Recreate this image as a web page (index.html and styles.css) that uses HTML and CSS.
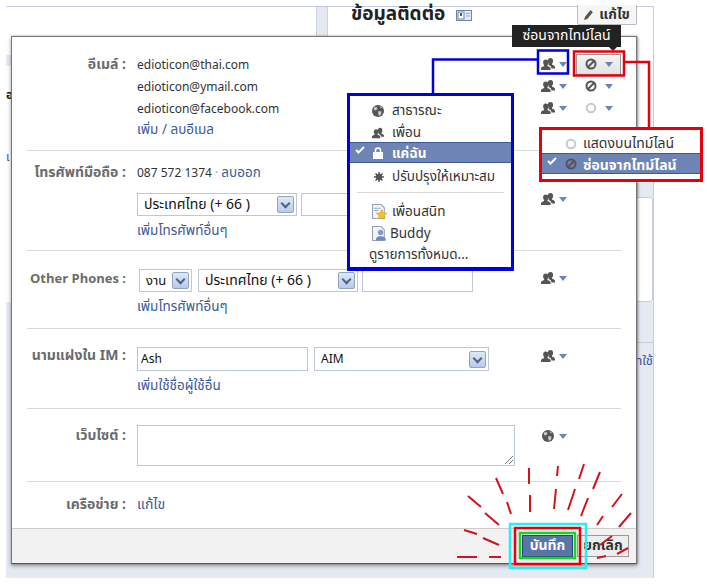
FILE: index.html
```html
<!DOCTYPE html>
<html lang="th">
<head>
    <meta charset="UTF-8">
    <meta name="viewport" content="width=device-width, initial-scale=1.0">
    <title>ข้อมูลติดต่อ</title>
    <link rel="stylesheet" href="styles.css">
</head>
<body>
    <svg class="sprites" width="0" height="0">
        <symbol id="i-friends" viewBox="0 0 14 12">
            <path d="M9.500 0c1.700 0 2.600 1.300 2.600 3 0 1.200-.5 2.200-1.100 2.800l.1 1c1.200.4 2.900 1 2.900 2.200v1.500h-3.500c0-1.900-1.300-2.700-3-3.500l.1-1.400c-.5-.7-.8-1.500-.8-2.500C6.800 1.300 7.800 0 9.500 0z"/>
            <path d="M4.800 1.500c1.700 0 2.700 1.300 2.700 3 0 1-.4 1.900-1 2.500v.9c1.500.5 3.100 1.200 3.100 2.400V12H0v-1.700c0-1.200 1.600-1.900 3.100-2.400V7c-.6-.6-1-1.500-1-2.500 0-1.700 1-3 2.700-3z"/>
        </symbol>
        <symbol id="i-block" viewBox="0 0 12 12">
            <circle cx="6" cy="6" r="4.500" fill="none" stroke="currentColor" stroke-width="2"/>
            <path d="M3 9l6-6" stroke="currentColor" stroke-width="2"/>
        </symbol>
        <symbol id="i-ring" viewBox="0 0 12 12">
            <circle cx="6" cy="6" r="4.300" fill="none" stroke="#c8c8c8" stroke-width="2"/>
        </symbol>
        <symbol id="i-globe" viewBox="0 0 12 12">
            <circle cx="6" cy="6" r="6" fill="#555"/>
            <path d="M2 2.500l2.500-.5 1 1.500-1.500 2-2-.5zM6.500 6l3 .5-.5 3-2 1.500-1-3zM8 1l2 1.500-1.500 1z" fill="#c9c9c9"/>
        </symbol>
        <symbol id="i-lock" viewBox="0 0 10 12">
            <path d="M0 5h10v7H0z"/>
            <path d="M2.500 5.500V3.500a2.500 2.500 0 0 1 5 0v2" fill="none" stroke="currentColor" stroke-width="1.600"/>
        </symbol>
        <symbol id="i-gear" viewBox="0 0 10 10">
            <circle cx="5" cy="5" r="2.300" fill="none" stroke="currentColor" stroke-width="1.800"/>
            <path d="M5 0v10M0 5h10M1.500 1.500l7 7M8.500 1.500l-7 7" stroke="currentColor" stroke-width="1.500"/>
        </symbol>
        <symbol id="i-check" viewBox="0 0 10 8">
            <path d="M1 4l2.500 2.500L9 1" fill="none" stroke="currentColor" stroke-width="2"/>
        </symbol>
    </svg>

    <!-- หน้าหลังกล่อง -->
    <div class="page">
        <div class="page-head">
            <div class="page-gutter"></div>
            <h2>ข้อมูลติดต่อ</h2>
            <svg class="card-icon" width="16" height="11" viewBox="0 0 16 11">
                <rect x=".5" y=".5" width="15" height="10" fill="#e4e9f4" stroke="#6d84b4"/>
                <rect x="2" y="2" width="6" height="7" fill="#fff" stroke="#6d84b4"/>
                <rect x="4" y="3" width="2" height="3" fill="#3b5998"/>
                <path d="M10 3.500h4M10 6h4" stroke="#9aabcc"/>
            </svg>
            <button class="page-edit">
                <svg width="11" height="11" viewBox="0 0 10 10"><path d="M0 10l1-3 5-6 2 2-5 6z" fill="#555"/></svg>
                แก้ไข
            </button>
        </div>
        <div class="page-body">
            <div class="rail-left">
                <div class="rail-tab"></div>
                <div class="rail-space">
                    <b class="cut-a">อ</b>
                    <span class="cut-b">เ</span>
                </div>
                <div class="rail-fill"></div>
            </div>
            <div class="page-main"></div>
            <div class="rail-right">
                <div class="rail-white"></div>
                <div class="rail-band"></div>
                <div class="rail-card"></div>
                <div class="rail-band rail-band-low"></div>
                <div class="rail-link">าใช้</div>
                <div class="rail-fill"></div>
            </div>
        </div>
        <div class="page-foot"></div>
    </div>

    <!-- กล่องแก้ไข -->
    <div class="dialog">
        <div class="row row-email">
            <div class="label">อีเมล์ :</div>
            <div class="field">
                <div class="line">edioticon@thai.com</div>
                <div class="line">edioticon@ymail.com</div>
                <div class="line">edioticon@facebook.com</div>
                <a class="line" href="#">เพิ่ม / ลบอีเมล</a>
            </div>
            <div class="privacy">
                <div class="privacy-line">
                    <span class="pick"><svg class="ico-f"><use href="#i-friends"/></svg><i class="arrow"></i></span>
                    <span class="pick pick-active"><svg class="ico-s"><use href="#i-block"/></svg><i class="arrow"></i></span>
                </div>
                <div class="privacy-line">
                    <span class="pick"><svg class="ico-f"><use href="#i-friends"/></svg><i class="arrow"></i></span>
                    <span class="pick pick-second"><svg class="ico-s"><use href="#i-block"/></svg><i class="arrow"></i></span>
                </div>
                <div class="privacy-line">
                    <span class="pick"><svg class="ico-f"><use href="#i-friends"/></svg><i class="arrow"></i></span>
                    <span class="pick pick-second"><svg class="ico-s"><use href="#i-ring"/></svg><i class="arrow"></i></span>
                </div>
            </div>
        </div>

        <div class="row row-mobile">
            <div class="label">โทรศัพท์มือถือ :</div>
            <div class="field">
                <div class="line">087 572 1374 <span class="dot">·</span> <a href="#">ลบออก</a></div>
                <div class="controls controls-mobile">
                    <div class="select w-country"><span>ประเทศไทย (+ 66 )</span><i class="select-btn"></i></div>
                    <div class="input w-number"></div>
                </div>
                <a class="line link-after" href="#">เพิ่มโทรศัพท์อื่นๆ</a>
            </div>
            <div class="privacy privacy-mobile">
                <span class="pick"><svg class="ico-f"><use href="#i-friends"/></svg><i class="arrow"></i></span>
            </div>
        </div>

        <div class="row row-other">
            <div class="label label-latin">Other Phones :</div>
            <div class="field">
                <div class="controls controls-other">
                    <div class="select w-type"><span>งาน</span><i class="select-btn"></i></div>
                    <div class="select w-country"><span>ประเทศไทย (+ 66 )</span><i class="select-btn"></i></div>
                    <div class="input w-other"></div>
                </div>
                <a class="line link-after" href="#">เพิ่มโทรศัพท์อื่นๆ</a>
            </div>
            <div class="privacy">
                <span class="pick"><svg class="ico-f"><use href="#i-friends"/></svg><i class="arrow"></i></span>
            </div>
        </div>

        <div class="row row-im">
            <div class="label">นามแฝงใน IM :</div>
            <div class="field">
                <div class="controls">
                    <div class="input w-name">Ash</div>
                    <div class="select w-service"><span>AIM</span><i class="select-btn"></i></div>
                </div>
                <a class="line link-after" href="#">เพิ่มใช้ชื่อผู้ใช้อื่น</a>
            </div>
            <div class="privacy">
                <span class="pick"><svg class="ico-f"><use href="#i-friends"/></svg><i class="arrow"></i></span>
            </div>
        </div>

        <div class="row row-web">
            <div class="label">เว็บไซต์ :</div>
            <div class="field">
                <div class="textarea">
                    <svg class="grip" width="8" height="8" viewBox="0 0 8 8"><path d="M0 8l8-8M4 8l4-4" stroke="#777"/></svg>
                </div>
            </div>
            <div class="privacy">
                <span class="pick"><svg class="ico-f"><use href="#i-globe"/></svg><i class="arrow"></i></span>
            </div>
        </div>

        <div class="row row-net">
            <div class="label">เครือข่าย :</div>
            <div class="field"><a class="line link-edit" href="#">แก้ไข</a></div>
        </div>

        <div class="foot">
            <button class="btn btn-save">บันทึก</button>
            <button class="btn btn-cancel">ยกเลิก</button>
        </div>
    </div>

    <!-- tooltip -->
    <div class="tip">ซ่อนจากไทม์ไลน์</div>

    <!-- เมนู -->
    <div class="menu menu-audience">
        <div class="item"><svg class="item-ico"><use href="#i-globe"/></svg>สาธารณะ</div>
        <div class="item"><svg class="item-ico"><use href="#i-friends"/></svg>เพื่อน</div>
        <div class="item item-on">
            <svg class="item-check"><use href="#i-check"/></svg>
            <svg class="item-ico"><use href="#i-lock"/></svg>แค่ฉัน
        </div>
        <div class="item"><svg class="item-ico item-ico-small"><use href="#i-gear"/></svg>ปรับปรุงให้เหมาะสม</div>
        <div class="menu-sep"></div>
        <div class="item">
            <svg class="item-doc" viewBox="0 0 14 14">
                <path d="M.5.500h8l3 3v10H.5z" fill="#f4f4f4" stroke="#9aa3b5"/>
                <path d="M2 4h6M2 6h4" stroke="#9aa3b5"/>
                <path d="M9 5l1.500 3.200 3.500.4-2.600 2.300.8 3.100L9 12.300 5.800 14l.8-3.100L4 8.600l3.500-.4z" fill="#f5c518" stroke="#c9a227" stroke-width=".5"/>
            </svg>เพื่อนสนิท
        </div>
        <div class="item item-buddy">
            <svg class="item-doc" viewBox="0 0 14 14">
                <path d="M.5.500h8l3 3v10H.5z" fill="#f4f4f4" stroke="#9aa3b5"/>
                <circle cx="8" cy="6" r="2.500" fill="#7f9bcb"/>
                <path d="M3.500 13.500c0-3 2-4 4.500-4s5 1 5 4z" fill="#6d8bc0"/>
            </svg>Buddy
        </div>
        <div class="item item-all">ดูรายการทั้งหมด...</div>
    </div>

    <div class="menu menu-timeline">
        <div class="item"><svg class="item-ico item-ico-ring"><use href="#i-ring"/></svg>แสดงบนไทม์ไลน์</div>
        <div class="item item-on">
            <svg class="item-check"><use href="#i-check"/></svg>
            <svg class="item-ico item-ico-ring item-ico-dark"><use href="#i-block"/></svg>ซ่อนจากไทม์ไลน์
        </div>
    </div>

    <!-- เส้นและกรอบที่วาดทับ -->
    <svg class="marks" width="707" height="584" viewBox="0 0 707 584">
        <path class="blue" d="M538 50.500h30v23h-30zM538 59.500H433v35"/>
        <path class="red" d="M574 51.500h50v24h-50zM623 62h26v65"/>
        <rect class="cyan" x="510" y="524" width="76" height="44"/>
        <rect class="red" x="515" y="528" width="65" height="36"/>
        <rect class="green" x="520" y="533" width="55" height="25"/>
        <path class="ray" d="M529 468v16M530 495v17M558 466l-1 10M556 489l-2 20M584 464l-5 15M600 472l-7 17M575 489l-7 21M588 498l-7 18M622 494l-10 13M603 516l-6 9M631 513l-12 14M612 536l-12 9M628 548l-11 6M606 556l-9 2M496 478l7 16M507 502l4 12M468 496l13 11M485 513l14 12M464 530l13 4M483 538l16 7M457 557h20M489 557h12"/>
    </svg>
</body>
</html>
```

FILE: styles.css
```css
* { box-sizing: border-box; }
html, body { margin: 0; padding: 0; }
body { width: 707px; height: 584px; position: relative; overflow: hidden; background: #fff; font-family: "Noto Sans Thai", Tahoma, "Liberation Sans", "Noto Sans", sans-serif; font-size: 12px; color: #333; }
a { color: #3b5998; text-decoration: none; font-size: 13.5px; }
.sprites { position: absolute; }

/* page behind the dialog */
.page { width: 648px; height: 572px; margin: 6px 0 0 6px; border-top: 1px solid #c5cbe0; border-right: 1px solid #c5cbe0; display: flex; flex-direction: column; }
.page-head { height: 29px; display: flex; align-items: flex-start; flex: none; }
.page-gutter { width: 12px; height: 29px; margin-left: 310px; background: #e5e9f2; border-left: 1px solid #ccd2e2; border-right: 1px solid #ccd2e2; }
.page-head h2 { margin: -3px 0 0 23px; font-size: 19px; line-height: 22px; color: #222; }
.card-icon { margin: 3px 0 0 11px; }
.page-edit { margin: -2px 16px 0 auto; height: 20px; width: 60px; display: flex; align-items: center; justify-content: center; gap: 4px; padding: 0; background: #f6f6f6; border: 1px solid #bbb; border-top: 0; border-radius: 0 0 2px 2px; font: bold 14px "Noto Sans Thai", Tahoma, sans-serif; color: #333; }
.page-body { flex: 1; display: flex; }
.rail-left { width: 5px; display: flex; flex-direction: column; }
.rail-tab { height: 11px; margin-top: 19px; background: #e5e9f2; flex: none; }
.rail-space { height: 236px; flex: none; font-size: 12px; }
.cut-a { display: block; margin-top: 20px; color: #222; }
.cut-b { display: block; margin-top: 44px; color: #3b5998; }
.rail-fill { flex: 1; background: #e5e9f2; }
.page-main { flex: 1; }
.rail-right { width: 17px; display: flex; flex-direction: column; }
.rail-white { height: 147px; }
.rail-band { height: 14px; background: #e5e9f2; }
.rail-card { height: 105px; border: 1px solid #c5cbe0; border-left: 0; border-radius: 0 3px 3px 0; background: #fff; }
.rail-band-low { height: 41px; border-bottom: 1px solid #ccc; }
.rail-link { height: 30px; padding-top: 8px; font-size: 13px; color: #3b5998; background: #e5e9f2; white-space: nowrap; direction: rtl; overflow: hidden; }
.page-foot { height: 14px; flex: none; background: #e5e9f2; }

/* dialog */
.dialog { position: absolute; left: 11px; top: 36px; width: 626px; height: 528px; background: #fff; border: 1px solid #777; border-bottom-color: #555; box-shadow: 0 2px 4px rgba(0,0,0,.35), 1px 0 2px rgba(0,0,0,.3); display: flex; flex-direction: column; }
.row { margin: 0 15px; display: flex; border-bottom: 1px solid #d9d9d9; }
.row-email { height: 114px; padding-top: 17px; }
.row-mobile { height: 100px; padding-top: 11px; }
.row-other { height: 78px; padding-top: 18px; }
.row-im { height: 80px; padding-top: 18px; }
.row-web { height: 73px; padding-top: 16px; }
.row-net { height: 46px; padding-top: 12px; border-bottom: 0; }
.label { width: 99px; flex: none; text-align: right; font-weight: bold; font-size: 14px; color: #6b6b6b; line-height: 22px; white-space: nowrap; display: flex; justify-content: flex-end; }
.label-latin { font-size: 13px; }
.row-other .label { margin-top: -1px; }
.row-im .label { margin-top: -2px; }
.field { width: 404px; flex: none; margin-left: 11px; }
.line { display: block; height: 22px; line-height: 22px; white-space: nowrap; }
.row-email a.line { margin-top: -1px; }
.link-edit { font-size: 14px; }
.dot { color: #999; }
.controls { display: flex; gap: 6px; }
.controls-mobile { margin-top: 9px; gap: 4px; }
.controls-other { margin-left: 2px; }
.link-after { margin-top: 4px; }
.select, .input { height: 23px; border: 1px solid #bdc7d8; background: #fff; color: #111; display: flex; align-items: center; padding-left: 6px; }
.select { justify-content: space-between; padding-right: 2px; }
.row-im .select, .row-im .input { height: 24px; }
.row-im .input { padding-left: 3px; }
.select-btn { width: 17px; height: 17px; border: 1px solid #8fa5c6; border-radius: 2px; background: linear-gradient(#dfe8f5, #b8cbe5); position: relative; flex: none; }
.select-btn::after { content: ""; position: absolute; left: 4px; top: 3px; width: 5px; height: 5px; border-right: 2px solid #4d6185; border-bottom: 2px solid #4d6185; transform: rotate(45deg); }
.w-country { width: 160px; font-size: 14px; }
.w-number { width: 47px; }
.w-type { width: 53px; font-size: 13px; }
.w-other { width: 111px; margin-left: -2px; }
.w-name { width: 171px; }
.w-service { width: 175px; }
.textarea { width: 378px; height: 41px; border: 1px solid #bdc7d8; position: relative; }
.grip { position: absolute; right: 1px; bottom: 1px; }

/* privacy pickers */
.privacy { flex: 1; margin-top: -1px; }
.privacy > .pick { height: 22px; margin-top: -1px; }
.privacy-mobile > .pick { margin-top: 27px; }
.row-web .privacy > .pick { margin-top: 1px; }
.privacy-line { height: 22px; display: flex; align-items: center; }
.pick { display: flex; align-items: center; width: 35px; color: #555; }
.pick-active, .pick-second { width: 45px; height: 21px; padding-left: 9px; }
.pick-active { background: linear-gradient(#f4f4f4, #e2e2e2); border: 1px solid #999; padding-left: 8px; }
.ico-f { width: 14px; height: 12px; fill: #555; flex: none; }
.ico-s { width: 12px; height: 12px; flex: none; margin-right: 8px; }
.arrow { width: 0; height: 0; margin-left: 4px; border-left: 4.5px solid transparent; border-right: 4.5px solid transparent; border-top: 5px solid #6d84b4; }
.ico-s + .arrow { margin-left: 0; }

/* footer */
.foot { flex: 1; background: #f2f2f2; border-top: 1px solid #ccc; display: flex; justify-content: flex-end; align-items: flex-start; gap: 4px; padding: 6px 7px 0 0; }
.btn { height: 22px; font: bold 14px/18px "Noto Sans Thai", Tahoma, sans-serif; padding: 0; }
.btn-save { width: 51px; background: #5b74a8; border: 1px solid #29447e; color: #fff; }
.btn-cancel { width: 52px; background: #eee; border: 1px solid #999; color: #333; }

/* tooltip + menus */
.tip { position: absolute; left: 512px; top: 25px; width: 109px; height: 22px; background: #222; color: #fff; font-size: 14px; line-height: 22px; text-align: center; white-space: nowrap; }
.tip::after { content: ""; position: absolute; right: 4px; top: 22px; border-left: 4px solid transparent; border-right: 4px solid transparent; border-top: 4px solid #222; }
.menu { position: absolute; background: #fff; color: #333; font-size: 13.5px; }
.menu-audience { left: 347px; top: 93px; width: 167px; height: 178px; border: 3px solid #0000dc; border-bottom-width: 4px; padding-top: 4px; }
.menu-timeline { left: 539px; top: 127px; width: 164px; height: 55px; border: 3px solid #e6000c; padding-top: 3px; font-size: 14px; }
.item { height: 22px; display: flex; align-items: center; padding-left: 42px; position: relative; white-space: nowrap; color: #333; }
.item-ico { position: absolute; left: 22px; top: 5px; width: 12px; height: 12px; fill: #555; color: #555; }
.item-ico-small { left: 24px; top: 6px; width: 10px; height: 10px; }
.item-ico-ring { left: 23px; }
.item-ico-dark { color: #555; }
.item-doc { position: absolute; left: 22px; top: 3px; width: 15px; height: 15px; }
.item-on { height: 21px; margin: -2px 0 3px; padding-top: 3px; background: #6d84b4; color: #fff; border-top: 1px solid #3b5998; border-bottom: 1px solid #3b5998; font-weight: bold; }
.item-on .item-ico { top: 4px; }
.item-on .item-ico:not(.item-ico-dark) { fill: #fff; color: #fff; }
.item-check { position: absolute; left: 5px; top: 3px; width: 10px; height: 8px; color: #fff; }
.menu-timeline .item { height: 20px; padding-left: 41px; }
.menu-timeline .item-on { height: 21px; margin: 0; }
.menu-sep { height: 1px; margin: 4px 7px 8px; background: #d9d9d9; }
.item-buddy { padding-left: 40px; height: 21px; }
.item-all { padding-left: 19px; height: 21px; }

/* drawn annotations */
.marks { position: absolute; left: 0; top: 0; fill: none; pointer-events: none; }
.blue { stroke: #0000dc; stroke-width: 2.500; }
.red { stroke: #e6000c; stroke-width: 2.500; }
.green { stroke: #12d820; stroke-width: 2.500; }
.cyan { stroke: #22f0f5; stroke-width: 2.500; }
.ray { stroke: #d4121c; stroke-width: 2; }
```
